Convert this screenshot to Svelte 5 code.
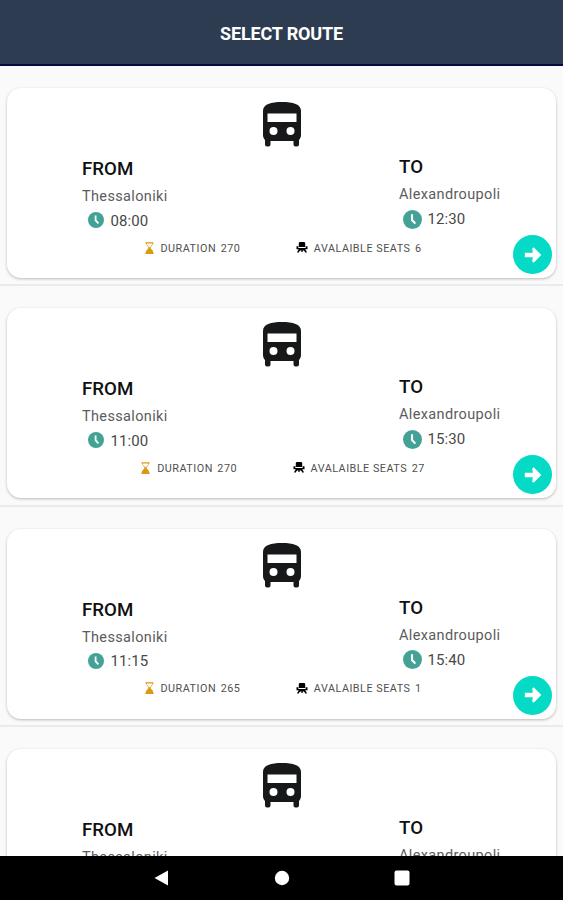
<script>
  const routes = [
    { from: 'Thessaloniki', to: 'Alexandroupoli', departure: '08:00', arrival: '12:30', duration: 270, seats: 6 },
    { from: 'Thessaloniki', to: 'Alexandroupoli', departure: '11:00', arrival: '15:30', duration: 270, seats: 27 },
    { from: 'Thessaloniki', to: 'Alexandroupoli', departure: '11:15', arrival: '15:40', duration: 265, seats: 1 },
    { from: 'Thessaloniki', to: 'Alexandroupoli' }
  ];
</script>

{#snippet clock()}
  <svg class="clock" viewBox="0 0 20 20">
    <circle cx="10" cy="10" r="10" fill="#43a295" />
    <path d="M9.500 4.500v6l3.500 3.800" fill="none" stroke="#fff" stroke-width="2.200" />
  </svg>
{/snippet}

<div class="screen">
  <header>
    <h1>SELECT ROUTE</h1>
  </header>

  <main>
    {#each routes as route}
      <div class="row">
        <article class="card">
          <svg class="bus" viewBox="0 0 38 45">
            <path
              fill="#17181a"
              fill-rule="evenodd"
              d="M0 9C0 2 8 0 19 0s19 2 19 9v24c0 2-.8 3.700-2 5v4.500q0 2-2 2h-1.500q-2 0-2-2V39h-23v3.500q0 2-2 2H4q-2 0-2-2V38c-1.200-1.300-2-3-2-5zM4.500 11.500v8.500h29v-8.500zM10.500 25a4 4 0 1 0 0 8 4 4 0 0 0 0-8zM27.500 25a4 4 0 1 0 0 8 4 4 0 0 0 0-8z"
            />
          </svg>

          <div class="stops">
            <section class="stop from">
              <h2>FROM</h2>
              <p>{route.from}</p>
              {#if route.departure}
                <div class="time">{@render clock()}<span>{route.departure}</span></div>
              {/if}
            </section>
            <section class="stop to">
              <h2>TO</h2>
              <p>{route.to}</p>
              {#if route.arrival}
                <div class="time">{@render clock()}<span>{route.arrival}</span></div>
              {/if}
            </section>
          </div>

          {#if route.duration}
            <div class="info">
              <div class="detail duration">
                <svg class="hourglass" viewBox="0 0 9 12">
                  <path d="M1.500 1v1.500L4.500 6l3-3.500V1" fill="none" stroke="#e5b04a" />
                  <path d="M.5.200h8v1.200h-8zM3.300 5.200h2.400V6.500L8 9v1.500h.7V12H.3v-1.500H1V9l2.300-2.500z" fill="#dc9a14" />
                </svg>
                <span>DURATION</span>
                <span>{route.duration}</span>
              </div>
              <div class="detail seats">
                <svg class="seat" viewBox="0 0 12 12">
                  <path d="M3.300 0h5.400l.8 1v4.500h-7V1zM0 4.500h2v2h8v-2h2V8H9.500l1.800 3-1 1L8 9.300H6.700V11H5.300V9.300H4L1.700 12l-1-1 1.800-3H0z" />
                </svg>
                <span>AVALAIBLE SEATS</span>
                <span>{route.seats}</span>
              </div>
            </div>
          {/if}

          <button class="go" aria-label="Choose route">
            <svg viewBox="0 0 18 18">
              <path d="M.8 6.800h8L8.200 2.500 9.700 1.200 17.300 9 9.700 16.800 8.200 15.500l.6-4.300h-8z" fill="#fff" />
            </svg>
          </button>
        </article>
      </div>
    {/each}
  </main>

  <nav>
    <svg viewBox="0 0 16 16"><path d="M.5 8 14 .5v15z" /></svg>
    <svg viewBox="0 0 16 16"><circle cx="8" cy="8" r="7.200" /></svg>
    <svg viewBox="0 0 16 16"><rect x=".5" y=".5" width="15" height="15" rx="2" /></svg>
  </nav>
</div>

<style>
  :global(body) {
    margin: 0;
  }
  .screen {
    display: flex;
    flex-direction: column;
    height: 900px;
    overflow: hidden;
    background: #fafafa;
    font-family: Roboto, sans-serif;
  }
  header {
    flex: none;
    display: flex;
    align-items: center;
    justify-content: center;
    box-sizing: border-box;
    height: 66px;
    padding-top: 3px;
    border-bottom: 2px solid #07093a;
    background: #2d3c50;
  }
  h1 {
    margin: 0;
    color: #fff;
    font-size: 18px;
    font-weight: 700;
    letter-spacing: -0.15px;
  }
  main {
    flex: 1;
    min-height: 0;
    overflow: hidden;
  }
  .row {
    box-sizing: border-box;
    height: 220.4px;
    padding: 22px 7px 0;
    border-bottom: 2px solid #ebebeb;
  }
  .card {
    position: relative;
    display: flex;
    flex-direction: column;
    height: 190px;
    border-radius: 14px;
    background: #fff;
    box-shadow: 0 1px 3px rgba(0, 0, 0, 0.26);
  }
  .bus {
    flex: none;
    width: 38px;
    height: 45px;
    margin: 14px auto 0;
  }
  .stops {
    display: flex;
    height: 93px;
  }
  .stop {
    box-sizing: border-box;
    padding-left: 75px;
  }
  .from {
    width: 317px;
    padding-top: 12px;
  }
  .to {
    padding-top: 10px;
  }
  h2 {
    margin: 0;
    color: #101010;
    font-size: 18.7px;
    font-weight: 500;
    line-height: 20px;
  }
  p {
    margin: 8px 0 0;
    color: #5c5c5c;
    font-size: 14.5px;
    line-height: 20px;
    letter-spacing: 0.36px;
  }
  .time {
    display: flex;
    align-items: center;
    height: 20px;
    margin-top: 4px;
    color: #484848;
    font-size: 15px;
    letter-spacing: 0.1px;
  }
  .from .time {
    margin-top: 3.5px;
  }
  .from .clock {
    width: 16px;
    height: 16px;
    margin: 0 6.5px 1px 6px;
  }
  .to .clock {
    width: 19px;
    height: 19px;
    margin: 0 5.5px 0 4px;
  }
  .info {
    display: flex;
    justify-content: center;
    gap: 56px;
    height: 16px;
    padding-left: 3px;
  }
  .detail {
    display: flex;
    align-items: center;
    color: #505050;
    font-size: 10.8px;
    letter-spacing: 0.5px;
  }
  .detail span + span {
    margin-left: 4.5px;
  }
  .hourglass {
    width: 9px;
    height: 12px;
    margin: 0 7px 1px 0;
  }
  .seat {
    width: 12px;
    height: 11px;
    margin: 0 5.5px 1px 0;
  }
  .go {
    position: absolute;
    right: 4px;
    bottom: 4px;
    display: flex;
    align-items: center;
    justify-content: center;
    width: 39px;
    height: 39px;
    padding: 0;
    border: none;
    border-radius: 50%;
    background: #04dac5;
  }
  .go svg {
    width: 18px;
    height: 18px;
  }
  nav {
    flex: none;
    display: flex;
    justify-content: center;
    align-items: center;
    gap: 104px;
    height: 44px;
    background: #000;
  }
  nav svg {
    width: 16px;
    height: 16px;
    fill: #fff;
  }
</style>
